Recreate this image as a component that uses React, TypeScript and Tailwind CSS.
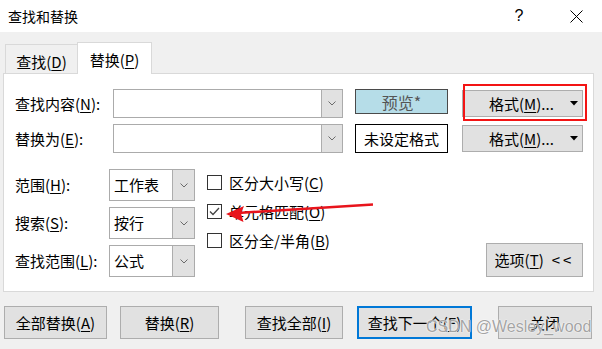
const U = ({ c }: { c: string }) => (
  <span className="underline decoration-1 underline-offset-[2px]">{c}</span>
);

const Chevron = () => (
  <svg width="8" height="5" viewBox="0 0 8 5" fill="none">
    <path d="M0.5 0.5 L4 4 L7.5 0.5" stroke="#6b6b6b" strokeWidth="1" />
  </svg>
);

const DropBtn = ({ w }: { w: string }) => (
  <div className={`${w} h-full bg-[#e1e1e1] border-l border-[#adadad] flex items-center justify-center`}>
    <Chevron />
  </div>
);

const FormatBtn = () => (
  <div className="ml-[14px] mt-[1px] w-[121px] h-[27px] bg-[#e1e1e1] border border-[#adadad] flex items-center pl-[26px] pr-[4px]">
    <span>
      格式(<U c="M" />)...
    </span>
    <svg className="ml-auto" width="8" height="5" viewBox="0 0 8 5">
      <path d="M0 0 L8 0 L4 4.5 Z" fill="#000" />
    </svg>
  </div>
);

const Select = ({ v }: { v: string }) => (
  <div className="w-[86px] h-[32px] border border-[#ababab] bg-white flex">
    <div className="flex-1 flex items-center pl-[4px]">{v}</div>
    <DropBtn w="w-[22px]" />
  </div>
);

const Check = ({ on, children }: { on?: boolean; children: React.ReactNode }) => (
  <div className="h-[15px] flex items-center">
    <div className="w-[15px] h-[15px] border border-[#333] bg-white flex items-center justify-center">
      {on && (
        <svg width="13" height="13" viewBox="0 0 13 13" fill="none">
          <path d="M2 6.5 L5 9.5 L11 3" stroke="#444" strokeWidth="1.3" />
        </svg>
      )}
    </div>
    <span className="ml-[7px]">{children}</span>
  </div>
);

const Btn = ({ cls, children }: { cls: string; children: React.ReactNode }) => (
  <div className={`${cls} h-[33px] bg-[#e1e1e1] flex items-center justify-center`}>{children}</div>
);

export default function App() {
  return (
    <div className="w-[602px] h-[349px] bg-[#f0f0f0] relative overflow-hidden text-[15px] leading-[20px] text-black font-['Noto_Sans_CJK_SC',sans-serif]">
      {/* title bar */}
      <div className="h-[32px] bg-white flex items-center pl-[8px]">
        <span className="text-[14px]">查找和替换</span>
        <span className="ml-auto w-[20px] text-center text-[16px] font-['Liberation_Sans',sans-serif] font-light">?</span>
        <div className="ml-[37px] w-[20px] flex justify-center mr-[16px]">
          <svg width="13" height="13" viewBox="0 0 13 13">
            <path d="M0.5 0.5 L12.5 12.5 M12.5 0.5 L0.5 12.5" stroke="#000" strokeWidth="1" />
          </svg>
        </div>
      </div>

      {/* tabs */}
      <div className="h-[41px] flex items-end pl-[5px]">
        <div className="w-[72px] h-[29px] border-t border-l border-[#d9d9d9] flex items-center justify-center pt-[5px]">
          查找(<U c="D" />)
        </div>
        <div className="w-[75px] h-[32px] -mb-px relative z-10 bg-white border border-b-0 border-[#d9d9d9] flex items-center justify-center pt-[2px]">
          替换(<U c="P" />)
        </div>
      </div>

      {/* panel */}
      <div className="ml-[3px] w-[591px] h-[219px] bg-white border border-[#d9d9d9] flex flex-col pt-[15px] pl-[11px] pr-[10px]">
        <div className="flex h-[29px]">
          <div className="w-[98px] flex items-center">
            查找内容(<U c="N" />):
          </div>
          <div className="w-[230px] h-[29px] border border-[#ababab] flex justify-end">
            <DropBtn w="w-[21px]" />
          </div>
          <div className="ml-[12px] w-[93px] h-[25px] bg-[#b6dde8] border border-[#4a4a4a] flex items-center justify-center text-[#555] text-[16px]">
            预览*
          </div>
          <FormatBtn />
        </div>

        <div className="flex h-[29px] mt-[6px]">
          <div className="w-[98px] flex items-center">
            替换为(<U c="E" />):
          </div>
          <div className="w-[230px] h-[29px] border border-[#ababab] flex justify-end">
            <DropBtn w="w-[21px]" />
          </div>
          <div className="ml-[12px] w-[93px] h-[29px] bg-white border border-black flex items-center justify-center">
            未设定格式
          </div>
          <FormatBtn />
        </div>

        <div className="flex mt-[16px]">
          <div className="flex flex-col gap-[6px]">
            <div className="flex items-center">
              <div className="w-[94px]">
                范围(<U c="H" />):
              </div>
              <Select v="工作表" />
            </div>
            <div className="flex items-center">
              <div className="w-[94px]">
                搜索(<U c="S" />):
              </div>
              <Select v="按行" />
            </div>
            <div className="flex items-center">
              <div className="w-[94px]">
                查找范围(<U c="L" />):
              </div>
              <Select v="公式" />
            </div>
          </div>

          <div className="ml-[12px] pt-[6px] flex flex-col gap-[14px]">
            <Check>
              区分大小写(<U c="C" />)
            </Check>
            <Check on>
              单元格匹配(<U c="O" />)
            </Check>
            <Check>
              区分全/半角(<U c="B" />)
            </Check>
          </div>

          <div className="ml-auto self-end w-[97px] h-[34px] bg-[#e1e1e1] border border-[#adadad] flex items-center justify-center">
            选项(<U c="T" />)<span className="ml-[8px] tracking-[3px]">&lt;&lt;</span>
          </div>
        </div>
      </div>

      {/* bottom buttons */}
      <div className="flex mt-[14px]">
        <Btn cls="ml-[4px] w-[103px] border border-[#adadad]">
          全部替换(<U c="A" />)
        </Btn>
        <Btn cls="ml-[13px] w-[99px] border border-[#adadad]">
          替换(<U c="R" />)
        </Btn>
        <Btn cls="ml-[26px] w-[98px] border border-[#adadad]">
          查找全部(<U c="I" />)
        </Btn>
        <Btn cls="ml-[14px] w-[115px] border-2 border-[#0078d7]">
          查找下一个(<U c="F" />)
        </Btn>
        <Btn cls="ml-[26px] w-[94px] border border-[#adadad]">关闭</Btn>
      </div>

      {/* annotations */}
      <div className="absolute left-[463px] top-[84px] w-[124px] h-[37px] border-2 border-[#f31414]" />
      <svg className="absolute left-0 top-0 pointer-events-none" width="602" height="349">
        <line x1="373" y1="204.5" x2="238" y2="213" stroke="#e8141c" strokeWidth="2.5" />
        <path d="M226 214 L244 206 L241 213.5 L243.5 222 Z" fill="#e8141c" />
      </svg>
      <div className="absolute left-[426px] top-[317px] text-[16px] leading-[20px] font-['Liberation_Sans',sans-serif] text-[#8c8c8c]/80 [text-shadow:0_0_1px_#fff,0_0_2px_#fff]">
        CSDN @Wesley_wood
      </div>
    </div>
  );
}
